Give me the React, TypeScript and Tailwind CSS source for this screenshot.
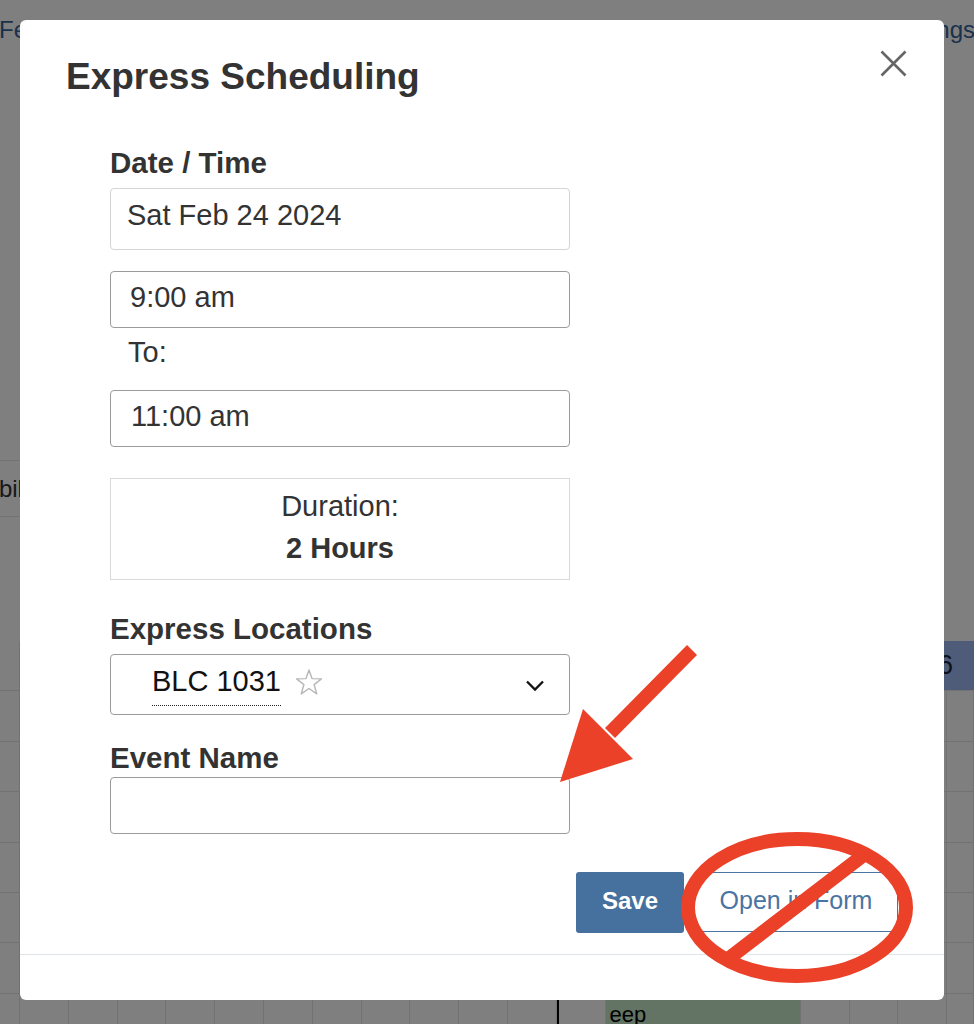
import React from "react";

const GRID_ROWS = 8;
const GRID_COLS = 21; // first narrow gutter + 19 fixed + 1 flexible

function CloseIcon() {
  return (
    <svg width="27" height="27" viewBox="0 0 27 27" fill="none" stroke="#666" strokeWidth="2.6">
      <path d="M1.5 1.5 L25.5 25.5 M25.5 1.5 L1.5 25.5" />
    </svg>
  );
}

function StarOutline() {
  return (
    <svg width="28" height="28" viewBox="0 0 27 27" className="ml-[14px] mt-[3px] shrink-0">
      <polygon
        points="13.5,1 16.5,9.3 25.5,9.5 18.4,15 21,24 13.5,18.8 6,24 8.6,15 1.5,9.5 10.5,9.3"
        fill="#fff"
        stroke="#b8b8b8"
        strokeWidth="1.4"
        strokeLinejoin="round"
      />
    </svg>
  );
}

function Chevron() {
  return (
    <svg width="20" height="12" viewBox="0 0 20 12" fill="none" stroke="#111" strokeWidth="2.3" className="ml-auto mr-[24px] mt-[14px]">
      <path d="M2 1.5 L10 9.5 L18 1.5" />
    </svg>
  );
}

function BackgroundPage() {
  return (
    <div className="flex flex-col">
      {/* page header */}
      <div className="flex justify-between pt-[16px] text-[24px] leading-[28px] text-[#34629a]">
        <span className="-ml-[1px]">February 2024</span>
        <span className="-mr-[1px]">Settings</span>
      </div>

      {/* filter row */}
      <div className="mt-[416px] flex h-[57px] w-[420px] items-center overflow-hidden border-y border-[#e4e4e4]">
        <span className="-ml-[66px] whitespace-nowrap text-[24px] text-[#333]">Availability</span>
      </div>

      {/* calendar grid */}
      <div className="mt-[124px] flex flex-col">
        {Array.from({ length: GRID_ROWS }).map((_, r) => (
          <div key={r} className="grid h-[50.4px] grid-cols-[20px_repeat(19,48.8px)_1fr] overflow-hidden">
            {Array.from({ length: GRID_COLS }).map((_, c) => {
              if (r === 0 && c === 19) {
                return (
                  <div key={c} className="col-span-2 flex items-center justify-end overflow-hidden whitespace-nowrap border-b border-[#e4e4e4] bg-[#9db9f2] pr-[21px] text-[27px] text-[#1b2233]">
                    16
                  </div>
                );
              }
              if (r === 0 && c === 20) return null;
              if (r === GRID_ROWS - 1 && c === 13) {
                return (
                  <div key={c} className="col-span-4 border-r border-[#e4e4e4] bg-[#c9e8c9] pl-[4px] pt-[8px] text-[22px] leading-[26px] text-black">
                    eep
                  </div>
                );
              }
              if (r === GRID_ROWS - 1 && c > 13 && c < 17) return null;
              return (
                <div
                  key={c}
                  className={
                    r === GRID_ROWS - 1 && c === 12
                      ? "border-l-2 border-r border-b border-l-black border-r-[#e4e4e4] border-b-[#e4e4e4]"
                      : "border-r border-b border-[#e4e4e4]"
                  }
                />
              );
            })}
          </div>
        ))}
      </div>
    </div>
  );
}

function Field({ children, light = false, className = "" }: { children?: React.ReactNode; light?: boolean; className?: string }) {
  return (
    <div
      className={`flex items-center rounded-[4px] border text-[29px] text-[#333] ${
        light ? "border-[#d4d4d4]" : "border-[#9b9b9b]"
      } ${className}`}
    >
      {children}
    </div>
  );
}

function Label({ children, className = "" }: { children: React.ReactNode; className?: string }) {
  return <label className={`text-[29.5px] font-bold leading-[34px] text-[#333] ${className}`}>{children}</label>;
}

export default function App() {
  return (
    <div className="relative h-[1024px] overflow-hidden bg-white font-['Liberation_Sans',Arial,sans-serif]">
      <BackgroundPage />

      {/* dim overlay */}
      <div className="absolute inset-0 bg-black/50" />

      {/* modal */}
      <div role="dialog" className="absolute left-[20px] top-[20px] flex h-[980px] w-[924px] flex-col rounded-[6px] bg-white">
        {/* Header */}
        <div className="flex items-start justify-between pl-[46px] pr-[37px] pt-[36px]">
          <h1 className="text-[37px] font-bold leading-[41px] text-[#333]">Express Scheduling</h1>
          <button className="-mt-[6px]" aria-label="Close">
            <CloseIcon />
          </button>
        </div>

        {/* Form */}
        <div className="ml-[90px] mt-[49px] flex w-[460px] flex-col">
          <Label>Date / Time</Label>
          <Field light className="mt-[8px] h-[62px] pb-[6px] pl-[16px]">
            Sat Feb 24 2024
          </Field>
          <Field className="mt-[21px] h-[57px] pb-[4px] pl-[19px]">9:00 am</Field>
          <div className="mt-[7px] pl-[18px] text-[29px] leading-[34px] text-[#333]">To:</div>
          <Field className="mt-[21px] h-[57px] pb-[3px] pl-[20px]">11:00 am</Field>

          <div className="mt-[31px] flex h-[102px] flex-col items-center border border-[#d9d9d9] pt-[6px] text-[29px] leading-[42px] text-[#333]">
            <span>Duration:</span>
            <span className="font-bold">2 Hours</span>
          </div>

          <Label className="mt-[32px]">Express Locations</Label>
          <div className="mt-[8px] flex h-[61px] items-start rounded-[4px] border border-[#9b9b9b] pl-[41px] pt-[11px] text-[29px] text-[#111]">
            <span className="border-b border-dotted border-[#222] pb-[9px] leading-[30px]">BLC 1031</span>
            <StarOutline />
            <Chevron />
          </div>

          <Label className="mt-[26px]">Event Name</Label>
          <Field className="mt-[2px] h-[57px]" />
        </div>

        {/* Actions */}
        <div className="mt-[38px] flex items-start justify-end gap-[10px] pr-[46px]">
          <button className="flex h-[61px] w-[108px] items-center justify-center rounded-[3px] bg-[#46709d] pb-[3px] text-[24px] font-bold text-white">
            Save
          </button>
          <button className="flex h-[60px] w-[204px] items-center justify-center rounded-[3px] border border-[#4a74a2] bg-white pb-[2px] text-[25px] text-[#4a74a2]">
            Open in Form
          </button>
        </div>

        <div className="mt-[21px] border-t border-[#dfe4e9]" />
      </div>

      {/* red annotations */}
      <svg className="pointer-events-none absolute inset-0" width="974" height="1024" viewBox="0 0 974 1024">
        <line x1="692" y1="650" x2="610" y2="733" stroke="#ea4128" strokeWidth="14" />
        <polygon points="560,782 583,709 633,759" fill="#ea4128" />
        <ellipse cx="797" cy="907.5" rx="109" ry="68.5" fill="none" stroke="#ea4128" strokeWidth="14" />
        <line x1="728" y1="959" x2="865" y2="854" stroke="#ea4128" strokeWidth="14" />
      </svg>
    </div>
  );
}
